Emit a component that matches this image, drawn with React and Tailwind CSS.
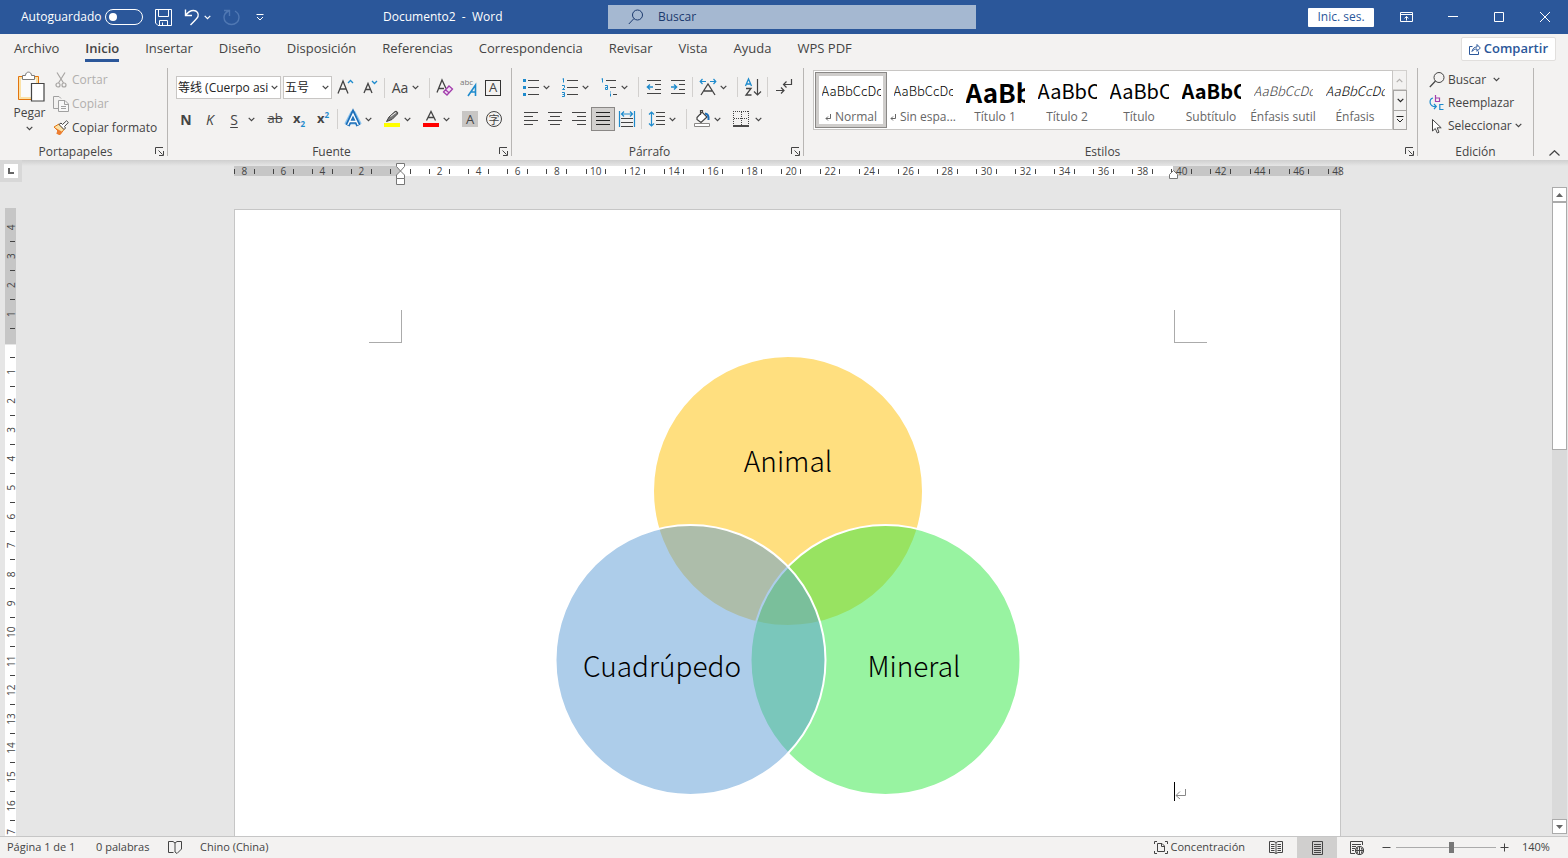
import { Fragment } from "react";

const TABS = [
  "Archivo",
  "Inicio",
  "Insertar",
  "Diseño",
  "Disposición",
  "Referencias",
  "Correspondencia",
  "Revisar",
  "Vista",
  "Ayuda",
  "WPS PDF",
];

const STYLES = [
  { name: "Normal", mark: true, selected: true, preview: "text-[13px] font-light text-black" },
  { name: "Sin espa...", mark: true, preview: "text-[13px] font-light text-black" },
  { name: "Título 1", preview: "text-[26px] font-bold text-black" },
  { name: "Título 2", preview: "text-[20px] text-black" },
  { name: "Título", preview: "text-[20px] text-black" },
  { name: "Subtítulo", preview: "text-[20px] font-bold text-black" },
  { name: "Énfasis sutil", preview: "text-[13px] font-light italic text-[#404040]" },
  { name: "Énfasis", preview: "text-[13px] font-light italic text-black" },
];

const Icon = ({ w = 24, h = 24, className = "", children }) => (
  <svg
    width={w}
    height={h}
    viewBox={`0 0 ${w} ${h}`}
    fill="none"
    stroke="#444444"
    className={`shrink-0 ${className}`}
    aria-hidden="true"
  >
    {children}
  </svg>
);

const Chevron = ({ className = "" }) => (
  <svg width="7" height="5" viewBox="0 0 7 5" fill="none" stroke="currentColor" strokeWidth="1.2" className={`shrink-0 ${className}`}>
    <path d="M0.7 0.8L3.5 3.6L6.3 0.8" />
  </svg>
);

const Tool = ({ label, active, children }) => (
  <button
    type="button"
    aria-label={label}
    className={
      active
        ? "flex h-6 w-6 shrink-0 items-center justify-center border border-[#8a8886] bg-[#d2d0ce]"
        : "flex h-6 w-6 shrink-0 items-center justify-center"
    }
  >
    {children}
  </button>
);

const More = ({ label }) => (
  <button type="button" aria-label={label} className="flex h-6 w-[15px] shrink-0 items-center">
    <Chevron />
  </button>
);

const Sep = () => <div className="mr-[3px] ml-[2px] h-5 w-px shrink-0 bg-[#d2d0ce]" />;

const Launcher = ({ label }) => (
  <button type="button" aria-label={label} className="absolute right-[3px] bottom-0">
    <Icon w={9} h={9}>
      <path d="M0.5 7V0.5H8M3.5 3.5L7.5 7.5M8.5 4V8.5H4" />
    </Icon>
  </button>
);

const Group = ({ title, className, launcher = true, children }) => (
  <section aria-label={title} className={`relative flex flex-col border-r border-[#b8b6b4] ${className}`}>
    <div className="flex-1">{children}</div>
    <div className={launcher ? "pr-4 text-center leading-2" : "text-center leading-2"}>{title}</div>
    {launcher && <Launcher label={`Opciones de ${title}`} />}
  </section>
);

const TitleBar = () => (
  <header className="flex h-[34px] shrink-0 items-center bg-[#2b579a] text-white">
    <label className="ml-[21px] flex w-[122px] items-center justify-between">
      Autoguardado
      <input type="checkbox" role="switch" className="peer sr-only" />
      <span className="flex h-4 w-[38px] items-center rounded-full border border-white px-[3px]">
        <span className="h-2 w-2 rounded-full bg-white" />
      </span>
    </label>
    <button type="button" aria-label="Guardar" className="ml-3">
      <Icon w={17} h={17}>
        <path stroke="white" d="M0.5 0.5H16.5V16.5H3L0.5 14ZM3.5 0.5V7.5H13.5V0.5M4.5 16.5V11.5H12.5V16.5M7.5 16V13.5" />
      </Icon>
    </button>
    <button type="button" aria-label="Deshacer" className="ml-3 flex items-center gap-1">
      <Icon w={16} h={18}>
        <path stroke="white" strokeWidth="1.4" d="M1.5 1.5V7.5H8M1.5 7.5C4 4 6.5 2.5 9.5 2.5C13 2.5 15 5.5 14 8.5C13.5 10 12 11.5 6.5 17" />
      </Icon>
      <Chevron />
    </button>
    <button type="button" aria-label="Rehacer" disabled className="ml-3">
      <Icon w={17} h={18}>
        <path stroke="#5078b3" strokeWidth="1.4" d="M1 2.5H6.5V8M5.5 3C2.5 4.5 1 7 1 9.5C1 13.5 4.5 16.5 8.5 16.5C12.5 16.5 16 13.5 16 9.5C16 6.5 14.5 4.5 12 3" />
      </Icon>
    </button>
    <button type="button" aria-label="Personalizar barra" className="ml-4">
      <Icon w={8} h={7}>
        <path stroke="white" d="M0.5 0.5H7.5M1 3L4 6L7 3" />
      </Icon>
    </button>
    <h1 className="ml-[119px] w-[225px] whitespace-pre">Documento2  -  Word</h1>
    <label className="flex h-6 w-[368px] items-center bg-[#a5b8d1] text-[#1c3a6e]">
      <Icon w={16} h={16} className="ml-5">
        <circle cx="9.5" cy="6" r="5" stroke="#1c3a6e" />
        <path stroke="#1c3a6e" d="M6 9.5L0.8 15" />
      </Icon>
      <input
        type="text"
        placeholder="Buscar"
        aria-label="Buscar"
        className="ml-[14px] w-full bg-transparent outline-none placeholder:text-[#1c3a6e]"
      />
    </label>
    <button type="button" className="ml-auto h-[19px] w-[66px] rounded-[1px] bg-white text-[#2b579a]">
      Inic. ses.
    </button>
    <button type="button" aria-label="Opciones de la cinta" className="ml-[26px]">
      <Icon w={13} h={10}>
        <path stroke="white" d="M0.5 0.5H12.5V9.5H0.5ZM0.5 2.5H12.5M6.5 8.5V4.5M4.5 6.3L6.5 4.5L8.5 6.3" />
      </Icon>
    </button>
    <button type="button" aria-label="Minimizar" className="ml-[35px]">
      <Icon w={10} h={10}>
        <path stroke="white" d="M0 4.5H10" />
      </Icon>
    </button>
    <button type="button" aria-label="Maximizar" className="ml-9">
      <Icon w={10} h={10}>
        <path stroke="white" d="M0.5 0.5H9.5V9.5H0.5Z" />
      </Icon>
    </button>
    <button type="button" aria-label="Cerrar" className="mr-[18px] ml-9">
      <Icon w={10} h={10}>
        <path stroke="white" d="M0 0L10 10M10 0L0 10" />
      </Icon>
    </button>
  </header>
);

const TabBar = () => (
  <nav className="flex h-[30px] shrink-0 items-center pr-3 pl-[14px] text-[13px]">
    <div className="flex h-full flex-1 items-start gap-[26px]">
      {TABS.map((tab) => (
        <button
          key={tab}
          type="button"
          className={
            tab === "Inicio"
              ? "h-7 border-b-3 border-[#2b579a] pt-[5px] font-semibold"
              : "h-7 border-b-3 border-transparent pt-[5px]"
          }
        >
          {tab}
        </button>
      ))}
    </div>
    <button
      type="button"
      className="flex h-6 items-center gap-[3px] rounded-[2px] border border-[#e1dfdd] bg-white px-[7px] font-semibold text-[#2b579a]"
    >
      <Icon w={12} h={12}>
        <path stroke="#2b579a" d="M3.5 3.5H0.5V11.5H9.5V8.5M3 8.5C3.5 5.5 5.5 4 8 4V1.5L11.3 5L8 8.3V6C6 6 4.5 6.5 3 8.5Z" />
      </Icon>
      Compartir
    </button>
  </nav>
);

const Clipboard = () => (
  <Group title="Portapapeles" className="w-[168px] shrink-0">
    <div className="flex pl-3">
      <button type="button" className="flex w-[35px] flex-col items-center pt-[3px]">
        <Icon w={30} h={32}>
          <path fill="#fbe2a8" stroke="#e3750e" d="M3.5 5.5H23.5V28.5H3.5Z" />
          <path fill="#fafafa" stroke="none" d="M6 8H21V26H6Z" />
          <path fill="white" stroke="#7a7a7a" d="M7.5 8.5V4.5H10.5C10.5 0 16.5 0 16.5 4.5H19.5V8.5Z" />
          <path fill="white" strokeWidth="1.2" d="M16.5 12.5H29V30H16.5Z" />
        </Icon>
        <span className="mt-[1px] leading-[18px]">Pegar</span>
        <Chevron className="mt-1" />
      </button>
      <div className="ml-[6px] flex flex-col">
        <button type="button" disabled className="flex h-6 items-center gap-[3px] text-[#b1afad]">
          <Icon w={16} h={16}>
            <g stroke="#a8a6a4" strokeWidth="1.2">
              <path d="M4 0.5L10.5 11M12 0.5L5.5 11" />
              <circle cx="5" cy="13" r="2" />
              <circle cx="11" cy="13" r="2" />
            </g>
          </Icon>
          Cortar
        </button>
        <button type="button" disabled className="flex h-6 items-center gap-[3px] text-[#b1afad]">
          <Icon w={16} h={16}>
            <g stroke="#a0a0a0">
              <path d="M5 12.5H0.5V0.5H6L8 2.5" />
              <path fill="#f8f8f8" d="M5.5 4.5H12L15.5 8V15.5H5.5ZM11.5 4.5V8.5H15.5M8 10.5H13M8 12.5H13" />
            </g>
          </Icon>
          Copiar
        </button>
        <button type="button" className="flex h-6 items-center gap-[3px]">
          <Icon w={16} h={16}>
            <path fill="#fbe2a8" stroke="#e3750e" d="M1 7L6 4L11 9.5L7 14.5L4 13.5L5 11Z" />
            <path fill="#ed7d31" stroke="none" d="M1 7L9.5 12L7 15L3.5 13.5L4.5 10.5Z" />
            <path fill="white" d="M6 4.5L8 3L9.5 4.5L13.5 0.8L15.3 2.5L11.5 6.5L12.5 8L11 9.5Z" />
          </Icon>
          Copiar formato
        </button>
      </div>
    </div>
  </Group>
);

const FontGroup = () => (
  <Group title="Fuente" className="w-[344px] shrink-0">
    <div className="flex h-[35px] items-center pt-1 pl-2">
      <div className="relative">
        <select
          aria-label="Fuente"
          className="h-[23px] w-[105px] appearance-none border border-[#c8c6c4] bg-white pr-2 pl-px text-[#222222]"
        >
          <option>等线 (Cuerpo asiático)</option>
        </select>
        <div className="pointer-events-none absolute inset-y-px right-px flex w-3 items-center bg-white pl-[3px]">
          <Chevron />
        </div>
      </div>
      <div className="relative mr-[2px] ml-[2px]">
        <select
          aria-label="Tamaño"
          className="h-[23px] w-[49px] appearance-none border border-[#c8c6c4] bg-white pl-px text-[#222222]"
        >
          <option>五号</option>
        </select>
        <div className="pointer-events-none absolute inset-y-px right-px flex w-3 items-center bg-white pl-[3px]">
          <Chevron />
        </div>
      </div>
      <Tool label="Aumentar tamaño">
        <Icon>
          <path strokeWidth="1.3" d="M4 17.5L9 5L14 17.5M6 13H12.3" />
          <path stroke="#1e8bcd" strokeWidth="1.3" d="M14 7L16.5 4.5L19 7" />
        </Icon>
      </Tool>
      <Tool label="Reducir tamaño">
        <Icon>
          <path strokeWidth="1.3" d="M6 17L10 7.5L14 17M7.5 13.5H12.5" />
          <path stroke="#1e8bcd" strokeWidth="1.3" d="M14 5L16.5 7.5L19 5" />
        </Icon>
      </Tool>
      <Sep />
      <Tool label="Cambiar mayúsculas">
        <span className="text-[14px]">Aa</span>
      </Tool>
      <More label="Más opciones de mayúsculas" />
      <Sep />
      <Tool label="Borrar formato">
        <Icon>
          <path strokeWidth="1.3" d="M4 16.5L9 4L13 12.5M6 12.5H11" />
          <path fill="#f3e1f5" stroke="#a33eac" strokeWidth="1.3" d="M10.5 16L16 10L19.5 13L14 19ZM12.5 13.8L16.2 17" />
        </Icon>
      </Tool>
      <Tool label="Guía fonética">
        <Icon>
          <text x="3" y="9" fontSize="8" fill="#777777" stroke="none">abc</text>
          <path stroke="#1e8bcd" strokeWidth="1.6" d="M11 20L18.5 9V20M14 16H18.5" />
        </Icon>
      </Tool>
      <Tool label="Borde de carácter">
        <span className="flex h-4 w-4 items-center justify-center border border-[#333333] text-[13px] leading-none">A</span>
      </Tool>
    </div>
    <div className="flex h-8 items-center pl-[6px]">
      <Tool label="Negrita">
        <span className="text-[14px] font-bold">N</span>
      </Tool>
      <Tool label="Cursiva">
        <span className="text-[14px] italic">K</span>
      </Tool>
      <Tool label="Subrayado">
        <span className="text-[14px] underline underline-offset-2">S</span>
      </Tool>
      <span className="w-[2px]" />
      <More label="Más subrayados" />
      <Tool label="Tachado">
        <span className="text-[13px] line-through">ab</span>
      </Tool>
      <Tool label="Subíndice">
        <span className="text-[13px] font-bold">
          x<sub className="static align-[-4px] text-[8px] text-[#1e8bcd]">2</sub>
        </span>
      </Tool>
      <Tool label="Superíndice">
        <span className="text-[13px] font-bold">
          x<sup className="static align-[5px] text-[8px] text-[#1e8bcd]">2</sup>
        </span>
      </Tool>
      <Sep />
      <Tool label="Efectos de texto">
        <Icon>
          <path stroke="#8cc4ee" strokeWidth="6" strokeLinejoin="round" d="M6 18L12 6.5L18 18M8.5 14.5H15.5" />
          <path stroke="#1e6fb8" strokeWidth="4.4" d="M6.5 18.5L12 6.5L17.5 18.5M8.5 14.5H15.5" />
          <path stroke="white" strokeWidth="1.3" d="M6.8 18L12 7L17.2 18M8.5 14.5H15.5" />
        </Icon>
      </Tool>
      <More label="Más efectos" />
      <Tool label="Resaltado">
        <Icon>
          <path fill="#777777" d="M6.5 14.5L9 10L15 4.5C16.5 3.5 18.5 5.5 17.5 7L12 12.5Z" />
          <path stroke="#f3f2f1" d="M10.5 9.5L16 5.5" />
          <path fill="#ffff00" stroke="none" d="M4 16H20V20H4Z" />
        </Icon>
      </Tool>
      <More label="Más colores de resaltado" />
      <Tool label="Color de fuente">
        <Icon>
          <path strokeWidth="1.3" d="M7.5 13.5L12 4.5L16.5 13.5M9 10.5H15" />
          <path fill="#ff0000" stroke="none" d="M4 16H20V20H4Z" />
        </Icon>
      </Tool>
      <More label="Más colores de fuente" />
      <Tool label="Sombreado de carácter">
        <span className="flex h-4 w-4 items-center justify-center bg-[#c8c6c4] text-[13px] leading-none">A</span>
      </Tool>
      <Tool label="Rodear caracteres">
        <span className="flex h-4 w-4 items-center justify-center rounded-full border border-[#444444] text-[11px] leading-none">字</span>
      </Tool>
    </div>
  </Group>
);

const ParagraphGroup = () => (
  <Group title="Párrafo" className="w-[292px] shrink-0">
    <div className="flex h-[35px] items-center pt-[3px] pl-[7px]">
      <Tool label="Viñetas">
        <Icon>
          <path d="M9 5.5H20M9 12.5H20M9 19.5H20" />
          <path fill="#1e8bcd" stroke="none" d="M4 4H7V7H4ZM4 11H7V14H4ZM4 18H7V21H4Z" />
        </Icon>
      </Tool>
      <More label="Más viñetas" />
      <Tool label="Numeración">
        <Icon>
          <path d="M9 5.5H20M9 12.5H20M9 19.5H20" />
          <path stroke="#1e8bcd" d="M4.5 4L5.5 3.5V7.5M4 10.5H6.5V12.5L4.5 14.5H7M4 17.5H6.5V21.5H4M4.5 19.5H6.5" />
        </Icon>
      </Tool>
      <More label="Más numeraciones" />
      <Tool label="Lista multinivel">
        <Icon>
          <path d="M9 5.5H19M13 12.5H19M16 19.5H20" />
          <path stroke="#1e8bcd" d="M4.5 4L5.5 3.5V7.5M8 10.5H10.5V14.5H8.5V12.5H10.5M13.5 16.5V17.5M13.5 18.5V21.5" />
        </Icon>
      </Tool>
      <More label="Más listas" />
      <Sep />
      <Tool label="Disminuir sangría">
        <Icon>
          <path d="M5 5.5H19M13 9.5H19M13 14.5H19M5 18.5H19" />
          <path stroke="#1e8bcd" strokeWidth="1.3" d="M11 12H5M8 9.5L5.3 12L8 14.5" />
        </Icon>
      </Tool>
      <Tool label="Aumentar sangría">
        <Icon>
          <path d="M5 5.5H19M13 9.5H19M13 14.5H19M5 18.5H19" />
          <path stroke="#1e8bcd" strokeWidth="1.3" d="M5 12H10.5M8 9.5L10.7 12L8 14.5" />
        </Icon>
      </Tool>
      <Sep />
      <Tool label="Diseño asiático">
        <Icon>
          <path strokeWidth="1.3" d="M5 20L12 9L19 20M8 16H16" />
          <path stroke="#1e8bcd" strokeWidth="1.2" d="M4 6.5H10M6.5 4L4.2 6.5L6.5 9M20 6.5H14M17.5 4L19.8 6.5L17.5 9" />
        </Icon>
      </Tool>
      <More label="Más diseño asiático" />
      <Sep />
      <Tool label="Ordenar">
        <Icon>
          <path stroke="#1e8bcd" strokeWidth="1.3" d="M4.5 11L7.5 4L10.5 11M5.5 9H9.5" />
          <path strokeWidth="1.3" d="M5 13.5H10L5 20H10.5" />
          <path strokeWidth="1.2" d="M16.5 4V20M13 16.5L16.5 20L20 16.5" />
        </Icon>
      </Tool>
      <Sep />
      <Tool label="Mostrar todo">
        <Icon>
          <path strokeWidth="1.2" d="M20.5 4V9.5H12.5M15.5 6.5L12.5 9.5L15.5 12.5M5 15.5H13M10 12.5L13 15.5L10 18.5" />
        </Icon>
      </Tool>
    </div>
    <div className="flex h-8 items-center pl-[7px]">
      <Tool label="Alinear a la izquierda">
        <Icon>
          <path d="M5 5.5H19M5 9.5H14M5 13.5H19M5 17.5H14" />
        </Icon>
      </Tool>
      <Tool label="Centrar">
        <Icon>
          <path d="M5 5.5H19M7 9.5H17M5 13.5H19M7 17.5H17" />
        </Icon>
      </Tool>
      <Tool label="Alinear a la derecha">
        <Icon>
          <path d="M5 5.5H19M10 9.5H19M5 13.5H19M10 17.5H19" />
        </Icon>
      </Tool>
      <Tool label="Justificar" active>
        <Icon w={22} h={22}>
          <path stroke="#222222" d="M4 4.5H18M4 8.5H18M4 12.5H18M4 16.5H18" />
        </Icon>
      </Tool>
      <Tool label="Distribuir">
        <Icon>
          <path d="M6 11.5H18M6 15.5H18M6 19.5H18" />
          <path stroke="#1e8bcd" strokeWidth="1.2" d="M4.5 4V20M19.5 4V20M7 7H17M9 4.5L6.5 7L9 9.5M15 4.5L17.5 7L15 9.5" />
        </Icon>
      </Tool>
      <Sep />
      <Tool label="Interlineado">
        <Icon>
          <path d="M11 5.5H20M11 9.5H20M11 13.5H20M11 17.5H20" />
          <path stroke="#1e8bcd" strokeWidth="1.2" d="M6.5 5V19M4 7.5L6.5 5L9 7.5M4 16.5L6.5 19L9 16.5" />
        </Icon>
      </Tool>
      <More label="Más interlineado" />
      <Sep />
      <Tool label="Sombreado">
        <Icon>
          <path strokeWidth="1.2" fill="white" d="M7 10.5L12 5L17 10L11 15.5L7 12.5ZM10.5 8V3.5H12.5V6" />
          <path stroke="#1e6fb8" strokeWidth="2" d="M15 6.5C18 7 19 9 18.5 13" />
          <path fill="white" stroke="#8a8886" d="M4.5 16.5H19.5V19.5H4.5Z" />
        </Icon>
      </Tool>
      <More label="Más sombreado" />
      <Tool label="Bordes">
        <Icon>
          <path strokeDasharray="1 1" d="M4.5 4V18M19.5 4V18M4 4.5H20M12.5 5V18M5 11.5H19" />
          <path stroke="black" strokeWidth="1.4" d="M4 19H20" />
        </Icon>
      </Tool>
      <span className="w-[2px]" />
      <More label="Más bordes" />
    </div>
  </Group>
);

const StylesGroup = () => (
  <Group title="Estilos" className="min-w-0 flex-1">
    <div className="flex h-[62px] items-start pt-[2px] pl-[9px]">
      <div className="flex h-[60px] border border-[#c8c6c4] bg-white p-px">
        {STYLES.map((style) => (
          <button
            key={style.name}
            type="button"
            className={
              style.selected
                ? "flex h-[56px] w-[72px] flex-col items-center border border-[#8a8886] bg-white text-[#666666] ring-3 ring-[#cfcdcb] ring-inset"
                : "flex h-[56px] w-[72px] flex-col items-center border border-transparent text-[#666666]"
            }
          >
            <span
              className={`flex h-[36px] w-[59px] items-center overflow-hidden font-['Noto_Sans_CJK_SC','Open_Sans',sans-serif] whitespace-nowrap ${style.preview}`}
            >
              AaBbCcDd
            </span>
            <span className="flex items-center gap-1 leading-4 whitespace-nowrap">
              {style.mark && (
                <Icon w={6} h={7}>
                  <path stroke="#666666" d="M5.5 0V4.5H1M3 2.5L1 4.5L3 6.5" />
                </Icon>
              )}
              {style.name}
            </span>
          </button>
        ))}
      </div>
      <div className="flex h-[60px] w-[14px] flex-col">
        <button type="button" aria-label="Anterior" className="flex flex-1 items-center justify-center border-y border-r border-[#d2d0ce] text-[#b1afad]">
          <Chevron className="rotate-180" />
        </button>
        <button type="button" aria-label="Siguiente" className="flex flex-1 items-center justify-center border border-[#a8a6a4] text-[#222222]">
          <Chevron />
        </button>
        <button type="button" aria-label="Más estilos" className="flex flex-1 items-center justify-center border border-t-0 border-[#a8a6a4]">
          <Icon w={8} h={7}>
            <path stroke="#222222" d="M0.5 0.5H7.5M1 3L4 6L7 3" />
          </Icon>
        </button>
      </div>
    </div>
  </Group>
);

const EditGroup = () => (
  <Group title="Edición" launcher={false} className="w-[116px] shrink-0">
    <div className="flex flex-col pl-[11px]">
      <button type="button" className="flex h-[23px] items-center gap-[3px]">
        <Icon w={16} h={16}>
          <circle cx="10" cy="5.5" r="5" />
          <path strokeWidth="1.2" d="M6.5 9L0.8 15" />
        </Icon>
        Buscar
        <Chevron className="ml-1" />
      </button>
      <button type="button" className="flex h-[23px] items-center gap-[3px]">
        <Icon w={16} h={16}>
          <path stroke="#a33eac" strokeWidth="1.2" d="M6.5 0V6.5H10.5V3H6.5" />
          <path stroke="#1e8bcd" strokeWidth="1.2" d="M4 3C0 4 0 10 4.5 11.5H7M5 9L7.3 11.5L5 14M14.5 9.5H10.8V14.5H14.5" />
        </Icon>
        Reemplazar
      </button>
      <button type="button" className="flex h-[23px] items-center gap-[3px]">
        <Icon w={16} h={16}>
          <path fill="white" d="M3.5 1.5V13L6.3 10.5L8.3 15L10 14.2L8.2 9.8H12.2Z" />
        </Icon>
        Seleccionar
        <Chevron />
      </button>
    </div>
  </Group>
);

// One ruler unit is one character wide.
const charX = (n) => 166.5 + n * 19.53;

const HorizontalRuler = () => {
  const numbers = [];
  for (let n = -8; n <= 48; n += 2) numbers.push(n);
  return (
    <svg width="1107" height="26" className="shrink-0 overflow-visible" fontSize="10" fill="#444444" aria-hidden="true">
      <rect x="0" y="6" width="1107" height="10" fill="#c6c6c6" />
      <rect x="167" y="6" width="772" height="10" fill="white" />
      {numbers.map((n) => (
        <Fragment key={n}>
          {n !== 0 && (
            <text x={charX(n)} y="15" textAnchor="middle">
              {Math.abs(n)}
            </text>
          )}
          <rect x={Math.floor(charX(n - 0.5))} y="9" width="1" height="5" />
          {n < 48 && <rect x={Math.floor(charX(n + 0.5))} y="9" width="1" height="5" />}
        </Fragment>
      ))}
      <g fill="white" stroke="#777777">
        <path d="M162.5 3.5H170.5V6.5L166.5 11L162.5 6.5Z" />
        <path d="M166.5 11L170.5 15V18.5H162.5V15Z" />
        <path d="M162.5 18.5H170.5V24.5H162.5Z" />
        <path d="M939.5 10.5L943.5 14.5V18.5H935.5V14.5Z" />
      </g>
    </svg>
  );
};

const lineY = (n) => 135 + n * 28.93;

const VerticalRuler = () => {
  const numbers = [];
  for (let n = -4; n <= 17; n++) numbers.push(n);
  return (
    <svg width="11" height="628" className="ml-[5px]" fontSize="10" fill="#444444" aria-hidden="true">
      <rect x="0" y="0" width="11" height="136" fill="#c6c6c6" />
      <rect x="0" y="137" width="11" height="491" fill="white" />
      {numbers.map((n) => (
        <Fragment key={n}>
          {n !== 0 && (
            <text transform={`translate(10 ${lineY(n)}) rotate(-90)`} textAnchor="middle">
              {Math.abs(n)}
            </text>
          )}
          <rect x="5" y={Math.floor(lineY(n + 0.5))} width="5" height="1" />
        </Fragment>
      ))}
    </svg>
  );
};

const Venn = () => (
  <svg
    width="468"
    height="446"
    viewBox="0 0 468 446"
    role="img"
    aria-label="Diagrama de Venn"
    className="font-['Noto_Sans_CJK_SC','Open_Sans',sans-serif] text-[28px] font-light"
  >
    <g stroke="white" strokeWidth="2">
      <circle cx="234" cy="136" r="135" fill="#ffc000" fillOpacity="0.5" />
      <circle cx="331.5" cy="305" r="135" fill="#31e743" fillOpacity="0.5" />
      <circle cx="136.5" cy="305" r="135" fill="#5b9bd5" fillOpacity="0.5" />
    </g>
    <g fill="black" textAnchor="middle">
      <text x="234" y="117">Animal</text>
      <text x="108" y="322">Cuadrúpedo</text>
      <text x="360" y="322">Mineral</text>
    </g>
  </svg>
);

const Page = () => (
  <main className="mt-[23px] flex min-h-0 w-[1107px] flex-1 flex-col border border-b-0 border-[#c6c6c6] bg-white pt-[100px] pr-[133px] pl-[134px]">
    <div className="flex justify-between">
      <div className="h-[33px] w-[33px] border-r border-b border-[#ababab]" />
      <div className="h-[33px] w-[33px] border-b border-l border-[#ababab]" />
    </div>
    <div className="mt-3 flex items-end pr-[21px]">
      <div className="flex flex-1 justify-center pl-[33px]">
        <Venn />
      </div>
      <div className="flex h-[19px] w-3 items-center border-l border-black">
        <Icon w={11} h={10} className="mt-1">
          <path stroke="#888888" d="M10.5 0V6.5H1M5 2.5L1 6.5L5 10" />
        </Icon>
      </div>
    </div>
  </main>
);

const ScrollBar = () => (
  <div className="mt-[27px] mb-[2px] flex w-4 shrink-0 flex-col border-r border-[#e6e6e6] bg-[#dadada]">
    <button type="button" aria-label="Subir" className="flex h-[15px] items-center justify-center border border-[#ababab] bg-white">
      <svg width="7" height="4" fill="#666666"><path d="M0 4L3.5 0L7 4Z" /></svg>
    </button>
    <div className="h-[248px] border border-[#ababab] bg-white" />
    <button type="button" aria-label="Bajar" className="mt-auto flex h-[15px] items-center justify-center border border-[#ababab] bg-white">
      <svg width="7" height="4" fill="#666666"><path d="M0 0L3.5 4L7 0Z" /></svg>
    </button>
  </div>
);

const StatusBar = () => (
  <footer className="flex h-[22px] shrink-0 items-center border-t border-[#c6c6c6] pr-[18px] pl-[7px] text-[11px]">
    <span className="w-[89px]">Página 1 de 1</span>
    <span className="w-[72px]">0 palabras</span>
    <button type="button" aria-label="Revisión" className="w-8">
      <Icon w={14} h={13}>
        <path d="M7 2V11M5.5 11.5H0.5V0.5H5L7 2L9 0.5H13.5V8M7 11L9 12.5L13.5 8" />
      </Icon>
    </button>
    <span>Chino (China)</span>
    <button type="button" className="ml-auto flex items-center gap-[3px]">
      <Icon w={14} h={13}>
        <path d="M3 0.5H0.5V3M0.5 10V12.5H3M11 0.5H13.5V3M13.5 10V12.5H11M3.5 2.5H8L10.5 5V10.5H3.5ZM7.5 2.5V5.5H10.5" />
      </Icon>
      Concentración
    </button>
    <button type="button" aria-label="Modo de lectura" className="ml-6">
      <Icon w={14} h={13}>
        <path d="M0.5 0.5H5L7 1.5L9 0.5H13.5V11.5H9L7 12.5L5 11.5H0.5ZM7 1.5V12.5M2 3.5H5.5M2 5.5H5.5M2 7.5H5.5M2 9.5H5.5M8.5 3.5H12M8.5 5.5H12M8.5 7.5H12M8.5 9.5H12" />
      </Icon>
    </button>
    <button type="button" aria-label="Diseño de impresión" className="ml-[14px] flex h-full w-10 items-center justify-center bg-[#d0cfce]">
      <Icon w={11} h={14}>
        <path d="M0.5 0.5H10.5V13.5H0.5ZM2 3.5H9M2 5.5H9M2 7.5H9M2 9.5H9M2 11.5H9" />
      </Icon>
    </button>
    <button type="button" aria-label="Diseño web" className="ml-[13px]">
      <Icon w={14} h={14}>
        <path d="M5 12.5H0.5V0.5H12.5V4M2 3.5H11M2 5.5H6M2 7.5H5M2 9.5H4" />
        <circle cx="9.5" cy="9.5" r="4" fill="#f3f2f1" strokeWidth="1.2" />
        <path d="M5.5 9.5H13.5M9.5 5.5V13.5M7.5 7C7 9 7 10 7.5 12M11.5 7C12 9 12 10 11.5 12" />
      </Icon>
    </button>
    <button type="button" aria-label="Alejar" className="ml-[18px]">
      <Icon w={9} h={9}>
        <path d="M0.5 4.5H8.5" />
      </Icon>
    </button>
    <input
      type="range"
      aria-label="Zoom"
      min="0"
      max="100"
      defaultValue="56"
      className="ml-[5px] h-3 w-[100px] appearance-none bg-transparent bg-[linear-gradient(#ababab,#ababab)] bg-[length:100%_1px] bg-center bg-no-repeat [&::-webkit-slider-thumb]:h-[11px] [&::-webkit-slider-thumb]:w-[5px] [&::-webkit-slider-thumb]:appearance-none [&::-webkit-slider-thumb]:bg-[#777777]"
    />
    <button type="button" aria-label="Acercar" className="ml-1">
      <Icon w={9} h={9}>
        <path d="M0.5 4.5H8.5M4.5 0.5V8.5" />
      </Icon>
    </button>
    <span className="ml-[13px] w-7">140%</span>
  </footer>
);

export default function App() {
  return (
    <div className="flex h-screen flex-col overflow-hidden bg-[#f3f2f1] font-['Open_Sans','Noto_Sans_CJK_SC',sans-serif] text-[12px] text-[#444444]">
      <TitleBar />
      <TabBar />
      <div className="flex h-[96px] shrink-0 pt-1 pb-1">
        <Clipboard />
        <FontGroup />
        <ParagraphGroup />
        <StylesGroup />
        <EditGroup />
        <div className="flex w-[34px] shrink-0 items-end">
          <button type="button" aria-label="Contraer la cinta" className="ml-[15px]">
            <Icon w={11} h={6}>
              <path strokeWidth="1.2" d="M0.5 5.5L5.5 0.7L10.5 5.5" />
            </Icon>
          </button>
        </div>
      </div>
      <div className="flex min-h-0 flex-1 bg-[#e6e6e6] bg-[linear-gradient(#cfcfcf,#e6e6e6)] bg-[length:100%_6px] bg-no-repeat">
        <div className="flex w-[23px] shrink-0 flex-col overflow-hidden pr-px">
          <button type="button" aria-label="Tabulación" className="mb-[26px] flex h-[22px] shrink-0 items-center justify-center bg-[#d8d8d8]">
            <span className="flex h-[14px] w-[14px] items-center justify-center bg-white">
              <span className="h-[6px] w-[6px] border-b-2 border-l-2 border-[#666666]" />
            </span>
          </button>
          <VerticalRuler />
        </div>
        <div className="flex min-w-0 flex-1 flex-col items-center">
          <HorizontalRuler />
          <Page />
        </div>
        <ScrollBar />
      </div>
      <StatusBar />
    </div>
  );
}
